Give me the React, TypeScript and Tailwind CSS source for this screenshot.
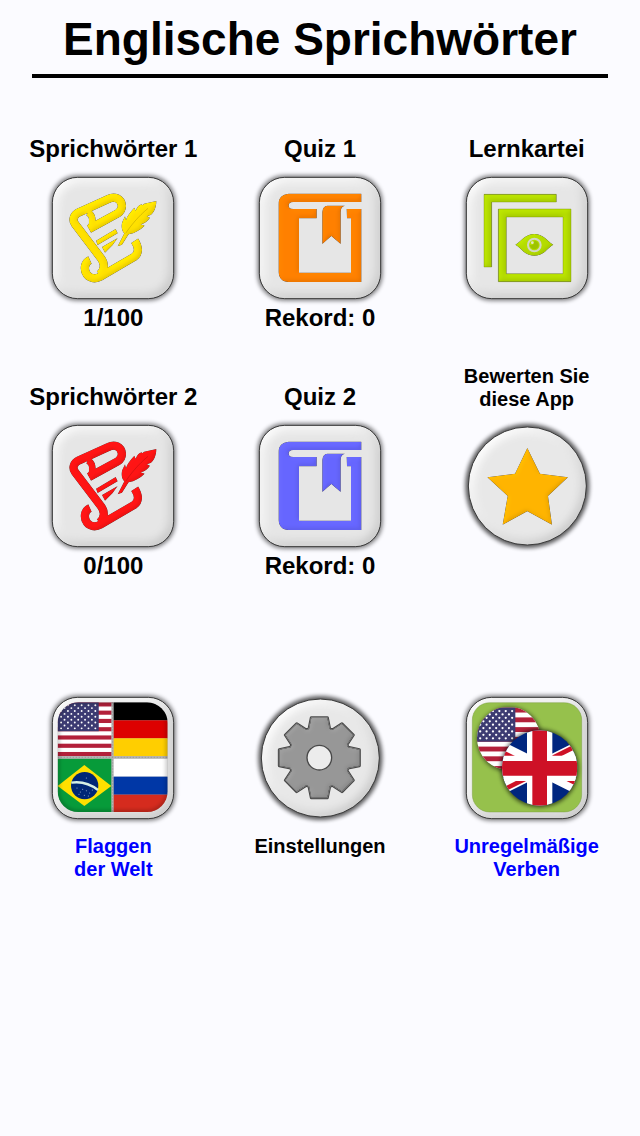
import type { ReactNode } from 'react'

interface EntryProps {
  title?: string[]
  caption?: string
  children: ReactNode
}

const EffectDefs = () => (
  <svg className="absolute size-0" aria-hidden="true">
    <defs>
      <filter id="glow" x="-20%" y="-20%" width="140%" height="140%">
        <feGaussianBlur stdDeviation="6" />
      </filter>
      <filter id="plateBevel" colorInterpolationFilters="sRGB">
        <feGaussianBlur in="SourceAlpha" stdDeviation="16" result="blur" />
        <feDiffuseLighting
          in="blur"
          surfaceScale="5"
          diffuseConstant="1"
          lightingColor="#fff"
          result="light"
        >
          <feDistantLight azimuth="225" elevation="50" />
        </feDiffuseLighting>
        <feComposite
          in="SourceGraphic"
          in2="light"
          operator="arithmetic"
          k1="0.6"
          k2="0.54"
          result="lit"
        />
        <feComposite in="lit" in2="SourceAlpha" operator="in" />
      </filter>
      <filter id="bevel" colorInterpolationFilters="sRGB">
        <feGaussianBlur in="SourceAlpha" stdDeviation="6" result="blur" />
        <feDiffuseLighting
          in="blur"
          surfaceScale="2"
          diffuseConstant="1"
          lightingColor="#fff"
          result="light"
        >
          <feDistantLight azimuth="225" elevation="60" />
        </feDiffuseLighting>
        <feComposite
          in="SourceGraphic"
          in2="light"
          operator="arithmetic"
          k1="0.6"
          k2="0.48"
          result="lit"
        />
        <feComposite in="lit" in2="SourceAlpha" operator="in" result="face" />
        <feGaussianBlur in="SourceAlpha" stdDeviation="2" result="edge" />
        <feComponentTransfer in="edge" result="softEdge">
          <feFuncA type="linear" slope="0.6" />
        </feComponentTransfer>
        <feMerge>
          <feMergeNode in="softEdge" />
          <feMergeNode in="face" />
        </feMerge>
      </filter>
      <clipPath id="flagsClip">
        <rect x="29" y="28" width="330" height="329" rx="62" />
      </clipPath>
      <clipPath id="usRound">
        <circle cx="140" cy="136" r="95" />
      </clipPath>
      <clipPath id="ukRound">
        <circle cx="233" cy="225" r="113" />
      </clipPath>
    </defs>
  </svg>
)

const Plate = ({ round, children }: { round?: boolean; children: ReactNode }) => (
  <svg
    viewBox="0 0 390 390"
    className="size-[130px] shrink-0 overflow-visible"
    aria-hidden="true"
  >
    {round ? (
      <>
        <circle cx="196" cy="195" r="186" fill="#000" opacity="0.65" filter="url(#glow)" />
        <circle cx="196" cy="195" r="177" fill="#e8e8e8" filter="url(#plateBevel)" />
        <circle cx="196" cy="195" r="177" fill="none" stroke="#3c3c3c" strokeWidth="3" />
      </>
    ) : (
      <>
        <rect x="7" y="7" width="376" height="376" rx="80" opacity="0.5" filter="url(#glow)" />
        <rect x="13" y="13" width="364" height="364" rx="76" fill="#e6e6e6" filter="url(#plateBevel)" />
        <rect x="13" y="13" width="364" height="364" rx="76" fill="none" stroke="#3c3c3c" strokeWidth="3" />
      </>
    )}
    {children}
  </svg>
)

const ScrollIcon = ({ color }: { color: string }) => (
  <g transform="translate(-25 -24)" filter="url(#bevel)">
    <g fill="none" stroke={color} strokeWidth="25" strokeLinejoin="round">
      <path d="M148 192 L234 145 C252 134 250 109 232 100 C222 96 214 98 206 102 L118 142 C102 150 97 164 106 177 L184 280 C196 296 195 315 180 329" />
      <path d="M144 142 C158 148 162 166 154 190" strokeWidth="20" />
      <path d="M151 285 C133 293 132 315 142 329 C152 341 168 343 182 335 L283 276 C298 266 298 247 285 227" />
    </g>
    <path d="M169 227 L228 192 L234 205 L174 240 Z" fill={color} />
    <path d="M187 246 L234 219 L219 240 L196 263 Z" fill={color} />
    <path
      d="M350 108 C350 126 344 142 333 150 L322 154 L331 158 C325 168 315 175 303 178 L315 182 C300 196 286 204 267 208 L247 239 L234 244 L254 205 C245 196 243 177 251 164 L256 154 L259 165 C262 154 270 143 284 128 L288 137 C292 126 298 120 306 118 L308 121 L313 116 Z"
      fill={color}
    />
    <path d="M258 205 C274 181 296 154 325 130" fill="none" stroke="#000" strokeOpacity="0.15" strokeWidth="3" />
  </g>
)

const BookIcon = ({ color }: { color: string }) => (
  <g transform="translate(-21 -24)" filter="url(#bevel)" fill={color}>
    <path d="M340 86 H122 C102 88 92 98 92 116 V322 C93 340 103 351 121 351 H340 V132 H296 L297 160 H309 V323 H153 V160 H206 V132 H136 C127 132 122 128 122 122 C122 115 127 111 136 111 H340 Z" />
    <path d="M238 122 H291 C282 124 278 130 278 142 V237 L250 213 L223 237 V141 C224 129 229 123 238 122 Z" />
  </g>
)

const CardsIcon = () => (
  <g transform="translate(-23 -24)">
    <g filter="url(#bevel)" fill="#b4dc00">
      <path d="M89 88 H306 V111 H112 V306 H89 Z" />
      <path d="M132 132 H350 V350 H132 Z M156 156 V326 H326 V156 Z" fillRule="evenodd" />
      <path d="M183 239 C202 228 211 207 240 207 C269 207 278 228 297 239 C278 250 269 272 240 272 C211 272 202 250 183 239 Z" />
    </g>
    <g fill="none" stroke="#6f8800" strokeOpacity="0.55" strokeWidth="2">
      <path d="M89 88 H306 V111 H112 V306 H89 Z" />
      <path d="M132 132 H350 V350 H132 Z M156 156 V326 H326 V156 Z" />
    </g>
    <circle cx="240" cy="240" r="19" fill="#b4dc00" stroke="#d2d6c4" strokeWidth="6" />
    <path d="M240 227 A13 13 0 1 1 227 240 C234 242 240 238 240 227 Z" fill="#9ec300" />
    <circle cx="234" cy="233" r="4" fill="#e1e6c8" />
  </g>
)

const StarIcon = () => (
  <path
    transform="translate(-23 -18)"
    filter="url(#bevel)"
    fill="#ffb400"
    d="M219 99 L257 176 L341 187 L281 243 L293 329 L219 289 L145 329 L160 243 L99 187 L182 176 Z"
  />
)

const toothPoints = Array.from({ length: 8 }, (_, i) => {
  const a = (i * Math.PI) / 4
  const profile = [
    [-31, 86],
    [-24, 120],
    [24, 120],
    [31, 86],
  ]
  return profile
    .map(([x, y]) => `${x * Math.cos(a) + y * Math.sin(a)},${x * Math.sin(a) - y * Math.cos(a)}`)
    .join(' ')
}).join(' ')

const GearIcon = () => (
  <g transform="translate(193 194)">
    <polygon points={toothPoints} fill="#484848" stroke="#484848" strokeWidth="9" strokeLinejoin="round" />
    <polygon
      points={toothPoints}
      fill="#979797"
      stroke="#979797"
      strokeWidth="3"
      strokeLinejoin="round"
    />
    <polygon points={toothPoints} fill="#979797" filter="url(#bevel)" />
    <circle r="37" fill="#ececec" stroke="#484848" strokeWidth="4" />
  </g>
)

// drawn in a 190 x 190 box
const UsFlag = ({ canton }: { canton: number }) => (
  <>
    <rect width="195" height="190" fill="#fff" />
    {[0, 1, 2, 3, 4, 5, 6].map((i) => (
      <rect key={i} y={i * 29.2} width="195" height="14.6" fill="#b3203a" />
    ))}
    <rect width={canton} height="102" fill="#3c3b72" />
    {Array.from({ length: 9 }, (_, row) =>
      Array.from({ length: row % 2 ? 5 : 6 }, (_, col) => (
        <circle
          key={`${row}-${col}`}
          cx={((col * 2 + (row % 2 ? 2 : 1)) * canton) / 12}
          cy={(row + 1) * 10.2}
          r="3.4"
          fill="#fff"
        />
      )),
    )}
  </>
)

const WorldFlags = () => (
  <g clipPath="url(#flagsClip)">
    <rect x="29" y="28" width="330" height="329" fill="#b5b5b5" />
    <g transform="translate(29 28) scale(0.85)">
      <UsFlag canton={145} />
    </g>
    <rect x="190" y="28" width="7" height="329" fill="#b5b5b5" />
    <g transform="translate(197 28)">
      <rect width="162" height="54" />
      <rect y="54" width="162" height="54" fill="#dd0000" />
      <rect y="108" width="162" height="54" fill="#ffce00" />
    </g>
    <g transform="translate(29 197)">
      <rect width="161" height="160" fill="#079b3a" />
      <path d="M0 82 L80 19 L161 82 L80 142 Z" fill="#ffe000" />
      <circle cx="81" cy="81" r="41" fill="#002776" />
      <path d="M41 72 C67 68 98 76 121 94" fill="none" stroke="#d5efe4" strokeWidth="7" />
      <g fill="#9db7d8">
        {[[58, 88], [68, 100], [75, 92], [86, 96], [96, 103], [80, 110], [92, 112], [64, 107], [104, 94], [86, 58]].map(
          ([x, y]) => (
            <circle key={`${x}-${y}`} cx={x} cy={y} r="1.6" />
          ),
        )}
      </g>
    </g>
    <g transform="translate(197 197)">
      <rect width="162" height="54" fill="#fff" />
      <rect y="54" width="162" height="54" fill="#0037a6" />
      <rect y="108" width="162" height="54" fill="#d52b1e" />
    </g>
    <path d="M29 193 H359" stroke="#b5b5b5" strokeWidth="7" />
    <path d="M29 193 H359 M194 28 V357" stroke="#8c8c8c" strokeWidth="2" strokeDasharray="4 5" />
    <rect x="29" y="28" width="330" height="329" rx="62" fill="none" stroke="#000" strokeOpacity="0.45" strokeWidth="6" filter="url(#glow)" />
  </g>
)

const VerbFlags = () => (
  <>
    <rect x="31" y="29" width="328" height="328" rx="52" fill="#96c14c" />
    <rect x="31" y="29" width="328" height="328" rx="52" fill="none" stroke="#6e9631" strokeOpacity="0.4" strokeWidth="3" />
    <circle cx="142" cy="139" r="98" opacity="0.55" filter="url(#glow)" />
    <g clipPath="url(#usRound)">
      <g transform="translate(45 44)">
        <UsFlag canton={115} />
      </g>
    </g>
    <circle cx="233" cy="226" r="117" opacity="0.65" filter="url(#glow)" />
    <g clipPath="url(#ukRound)">
      <rect x="120" y="112" width="226" height="226" fill="#00267f" />
      <path d="M73 145 L393 305 M393 145 L73 305" stroke="#fff" strokeWidth="44" />
      <path d="M73 154 L233 234 M393 296 L233 216 M393 134 L233 214 M73 316 L233 236" stroke="#ce1126" strokeWidth="14" />
      <path d="M233 112 V338 M120 226 H346" stroke="#fff" strokeWidth="76" />
      <path d="M233 112 V338 M120 226 H346" stroke="#ce1126" strokeWidth="44" />
    </g>
  </>
)

const Entry = ({ title = [], caption, children }: EntryProps) => (
  <button type="button" className="flex flex-col items-center justify-start font-bold">
    <span
      className={
        title.length > 1
          ? 'flex h-[46px] flex-col justify-end text-[20px] leading-[23px]'
          : 'flex h-[46px] flex-col justify-end text-[24px] leading-[28px]'
      }
    >
      {title.map((line) => (
        <span key={line} className="whitespace-nowrap">
          {line}
        </span>
      ))}
    </span>
    <span className="mt-[10px] mb-px block">{children}</span>
    {caption && <span className="text-[24px] leading-[28px]">{caption}</span>}
  </button>
)

export default function App() {
  return (
    <div className="min-h-screen bg-[#fbfbff] font-['Liberation_Sans',Arial,sans-serif] text-black">
      <EffectDefs />
      <header className="mx-8 border-b-4 border-black pt-[13px] pb-[9px]">
        <h1 className="text-center text-[46px] leading-[52px] font-bold whitespace-nowrap">
          Englische Sprichwörter
        </h1>
      </header>

      <main className="px-[10px] pt-[39px]">
        <div className="grid grid-cols-3 gap-y-[33px]">
          <Entry title={['Sprichwörter 1']} caption="1/100">
            <Plate>
              <ScrollIcon color="#ffe100" />
            </Plate>
          </Entry>
          <Entry title={['Quiz 1']} caption="Rekord: 0">
            <Plate>
              <BookIcon color="#ff8000" />
            </Plate>
          </Entry>
          <Entry title={['Lernkartei']}>
            <Plate>
              <CardsIcon />
            </Plate>
          </Entry>
          <Entry title={['Sprichwörter 2']} caption="0/100">
            <Plate>
              <ScrollIcon color="#ff1414" />
            </Plate>
          </Entry>
          <Entry title={['Quiz 2']} caption="Rekord: 0">
            <Plate>
              <BookIcon color="#6666ff" />
            </Plate>
          </Entry>
          <Entry title={['Bewerten Sie', 'diese App']}>
            <Plate round>
              <StarIcon />
            </Plate>
          </Entry>
        </div>

        <nav className="mt-[113px] grid grid-cols-3 pb-8 text-center text-[20px] leading-[23px] font-bold">
          <a href="#flaggen" className="flex flex-col items-center gap-3 text-[#0000ff]">
            <Plate>
              <WorldFlags />
            </Plate>
            <span>
              Flaggen
              <br />
              der Welt
            </span>
          </a>
          <button type="button" className="flex flex-col items-center gap-3">
            <Plate round>
              <GearIcon />
            </Plate>
            <span>Einstellungen</span>
          </button>
          <a href="#verben" className="flex flex-col items-center gap-3 text-[#0000ff]">
            <Plate>
              <VerbFlags />
            </Plate>
            <span>
              Unregelmäßige
              <br />
              Verben
            </span>
          </a>
        </nav>
      </main>
    </div>
  )
}
